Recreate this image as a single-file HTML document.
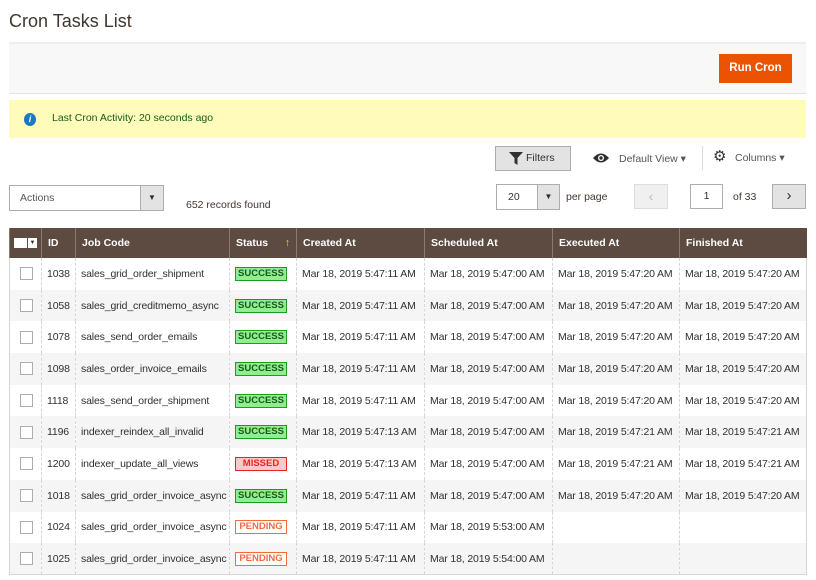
<!DOCTYPE html>
<html><head><meta charset="utf-8"><style>
*{box-sizing:border-box;margin:0;padding:0}
body{width:816px;height:580px;background:#fff;font-family:"Liberation Sans",sans-serif;color:#303030;position:relative;overflow:hidden;font-size:10.5px}
.a{position:absolute}
h1{position:absolute;left:9px;top:11px;font-size:18px;font-weight:normal;color:#41362f}
.bar{left:9px;top:42px;width:797px;height:52px;background:#f8f8f8;border-top:2px solid #eee;border-bottom:1px solid #e3e3e3}
.run{left:719px;top:54px;width:73px;height:29px;background:#eb5202;color:#fff;font-weight:bold;font-size:11.5px;text-align:center;line-height:29px}
.msg{left:9px;top:100px;width:797px;height:38px;background:#fffbbb}
.btn{background:#e3e3e3;border:1px solid #adadad}
table{position:absolute;left:9px;top:228px;border-collapse:collapse;width:797px;table-layout:fixed}
th{background:#5d4a40;color:#fff;text-align:left;font-size:10.5px;height:30px;padding-left:6px;border-left:1px solid #8a7a70}
td{height:31.7px;padding-left:5px;border-left:1px dashed #d6d6d6;white-space:nowrap;overflow:hidden;letter-spacing:-0.15px}
tr:nth-child(even) td{background:#f5f5f5}
tbody tr td:first-child{border-left:1px solid #d6d6d6}
td:last-child{border-right:1px solid #d6d6d6}
tbody tr:last-child td{border-bottom:1px solid #d6d6d6}
.cb{display:inline-block;width:13px;height:13px;border:1px solid #adadad;background:#fff;margin-left:5px;vertical-align:middle}
.s{display:inline-block;width:52px;text-align:center;font-weight:bold;font-size:9.5px;line-height:12px;border:1px solid;letter-spacing:0}
.ok{background:#90ee90;border-color:#1f9b1f;color:#185b18}
.mi{background:#ffc8c8;border-color:#e22626;color:#e22626}
.pe{background:#fff;border-color:#f56b3d;color:#f56b3d}
</style></head><body>
<h1>Cron Tasks List</h1>
<div class="a bar"></div>
<div class="a run">Run Cron</div>
<div class="a msg"></div>
<div class="a" style="left:24px;top:113px;width:12px;height:13px;border-radius:50%;background:#1979c3;color:#fff;font-size:9px;font-weight:bold;text-align:center;line-height:13px;font-style:italic">i</div>
<div class="a" style="left:52px;top:112px;font-size:10.5px;color:#185b18">Last Cron Activity: 20 seconds ago</div>
<div class="a btn" style="left:495px;top:146px;width:76px;height:25px;font-size:10.5px;line-height:23px;padding-left:30px">Filters</div>
<svg class="a" style="left:509px;top:152px" width="14" height="13"><path d="M0 0H14L8.5 6V13L5.5 11V6Z" fill="#303030"/></svg>
<svg class="a" style="left:592px;top:152px" width="18" height="12"><path d="M1 6Q9 -3 17 6Q9 15 1 6Z" fill="#303030"/><circle cx="9" cy="6" r="3" fill="#fff"/><circle cx="9" cy="6" r="1.7" fill="#303030"/></svg>
<div class="a" style="left:619px;top:153px;color:#555">Default View ▾</div>
<div class="a" style="left:702px;top:146px;width:1px;height:24px;background:#ddd"></div>
<div class="a" style="left:713px;top:149px;font-size:15px;line-height:15px">⚙</div>
<div class="a" style="left:735px;top:152px;color:#555">Columns ▾</div>
<div class="a" style="left:9px;top:185px;width:155px;height:26px;border:1px solid #adadad;background:#fff"><span style="position:absolute;left:10px;top:6px;color:#555">Actions</span><div style="position:absolute;right:0;top:0;width:23px;height:24px;background:#e3e3e3;border-left:1px solid #adadad;text-align:center;line-height:24px;font-size:8px">▼</div></div>
<div class="a" style="left:186px;top:199px;color:#41362f">652 records found</div>
<div class="a" style="left:496px;top:184px;width:64px;height:26px;border:1px solid #adadad;background:#fff"><span style="position:absolute;left:11px;top:6px">20</span><div style="position:absolute;right:0;top:0;width:22px;height:24px;background:#e3e3e3;border-left:1px solid #adadad;text-align:center;line-height:24px;font-size:8px">▼</div></div>
<div class="a" style="left:566px;top:191px;color:#41362f">per page</div>
<div class="a" style="left:634px;top:184px;width:34px;height:25px;background:#f0f0f0;border:1px solid #ddd;color:#bbb;text-align:center;line-height:23px;font-size:14px">‹</div>
<div class="a" style="left:690px;top:184px;width:33px;height:25px;border:1px solid #adadad;text-align:center;line-height:23px">1</div>
<div class="a" style="left:733px;top:191px;color:#41362f">of 33</div>
<div class="a btn" style="left:772px;top:184px;width:34px;height:25px;text-align:center;line-height:22px;font-size:15px">›</div>
<table>
<colgroup><col style="width:32px"><col style="width:34px"><col style="width:154px"><col style="width:67px"><col style="width:128px"><col style="width:128px"><col style="width:127px"><col style="width:127px"></colgroup>
<thead><tr><th style="padding-left:4px"><span style="display:inline-block;width:13px;height:10px;background:#fff;vertical-align:middle"></span><span style="display:inline-block;width:9px;height:10px;background:#fff;margin-left:1px;color:#303030;font-size:6px;line-height:10px;text-align:center;vertical-align:middle">▼</span></th><th>ID</th><th>Job Code</th><th>Status <span style="float:right;margin-right:6px;color:#e3d46a">↑</span></th><th>Created At</th><th>Scheduled At</th><th>Executed At</th><th>Finished At</th></tr></thead>
<tbody>
<tr><td><span class="cb"></span></td><td>1038</td><td>sales_grid_order_shipment</td><td><span class="s ok">SUCCESS</span></td><td>Mar 18, 2019 5:47:11 AM</td><td>Mar 18, 2019 5:47:00 AM</td><td>Mar 18, 2019 5:47:20 AM</td><td>Mar 18, 2019 5:47:20 AM</td></tr>
<tr><td><span class="cb"></span></td><td>1058</td><td>sales_grid_creditmemo_async</td><td><span class="s ok">SUCCESS</span></td><td>Mar 18, 2019 5:47:11 AM</td><td>Mar 18, 2019 5:47:00 AM</td><td>Mar 18, 2019 5:47:20 AM</td><td>Mar 18, 2019 5:47:20 AM</td></tr>
<tr><td><span class="cb"></span></td><td>1078</td><td>sales_send_order_emails</td><td><span class="s ok">SUCCESS</span></td><td>Mar 18, 2019 5:47:11 AM</td><td>Mar 18, 2019 5:47:00 AM</td><td>Mar 18, 2019 5:47:20 AM</td><td>Mar 18, 2019 5:47:20 AM</td></tr>
<tr><td><span class="cb"></span></td><td>1098</td><td>sales_order_invoice_emails</td><td><span class="s ok">SUCCESS</span></td><td>Mar 18, 2019 5:47:11 AM</td><td>Mar 18, 2019 5:47:00 AM</td><td>Mar 18, 2019 5:47:20 AM</td><td>Mar 18, 2019 5:47:20 AM</td></tr>
<tr><td><span class="cb"></span></td><td>1118</td><td>sales_send_order_shipment</td><td><span class="s ok">SUCCESS</span></td><td>Mar 18, 2019 5:47:11 AM</td><td>Mar 18, 2019 5:47:00 AM</td><td>Mar 18, 2019 5:47:20 AM</td><td>Mar 18, 2019 5:47:20 AM</td></tr>
<tr><td><span class="cb"></span></td><td>1196</td><td>indexer_reindex_all_invalid</td><td><span class="s ok">SUCCESS</span></td><td>Mar 18, 2019 5:47:13 AM</td><td>Mar 18, 2019 5:47:00 AM</td><td>Mar 18, 2019 5:47:21 AM</td><td>Mar 18, 2019 5:47:21 AM</td></tr>
<tr><td><span class="cb"></span></td><td>1200</td><td>indexer_update_all_views</td><td><span class="s mi">MISSED</span></td><td>Mar 18, 2019 5:47:13 AM</td><td>Mar 18, 2019 5:47:00 AM</td><td>Mar 18, 2019 5:47:21 AM</td><td>Mar 18, 2019 5:47:21 AM</td></tr>
<tr><td><span class="cb"></span></td><td>1018</td><td>sales_grid_order_invoice_async</td><td><span class="s ok">SUCCESS</span></td><td>Mar 18, 2019 5:47:11 AM</td><td>Mar 18, 2019 5:47:00 AM</td><td>Mar 18, 2019 5:47:20 AM</td><td>Mar 18, 2019 5:47:20 AM</td></tr>
<tr><td><span class="cb"></span></td><td>1024</td><td>sales_grid_order_invoice_async</td><td><span class="s pe">PENDING</span></td><td>Mar 18, 2019 5:47:11 AM</td><td>Mar 18, 2019 5:53:00 AM</td><td></td><td></td></tr>
<tr><td><span class="cb"></span></td><td>1025</td><td>sales_grid_order_invoice_async</td><td><span class="s pe">PENDING</span></td><td>Mar 18, 2019 5:47:11 AM</td><td>Mar 18, 2019 5:54:00 AM</td><td></td><td></td></tr>
</tbody></table>
</body></html>
